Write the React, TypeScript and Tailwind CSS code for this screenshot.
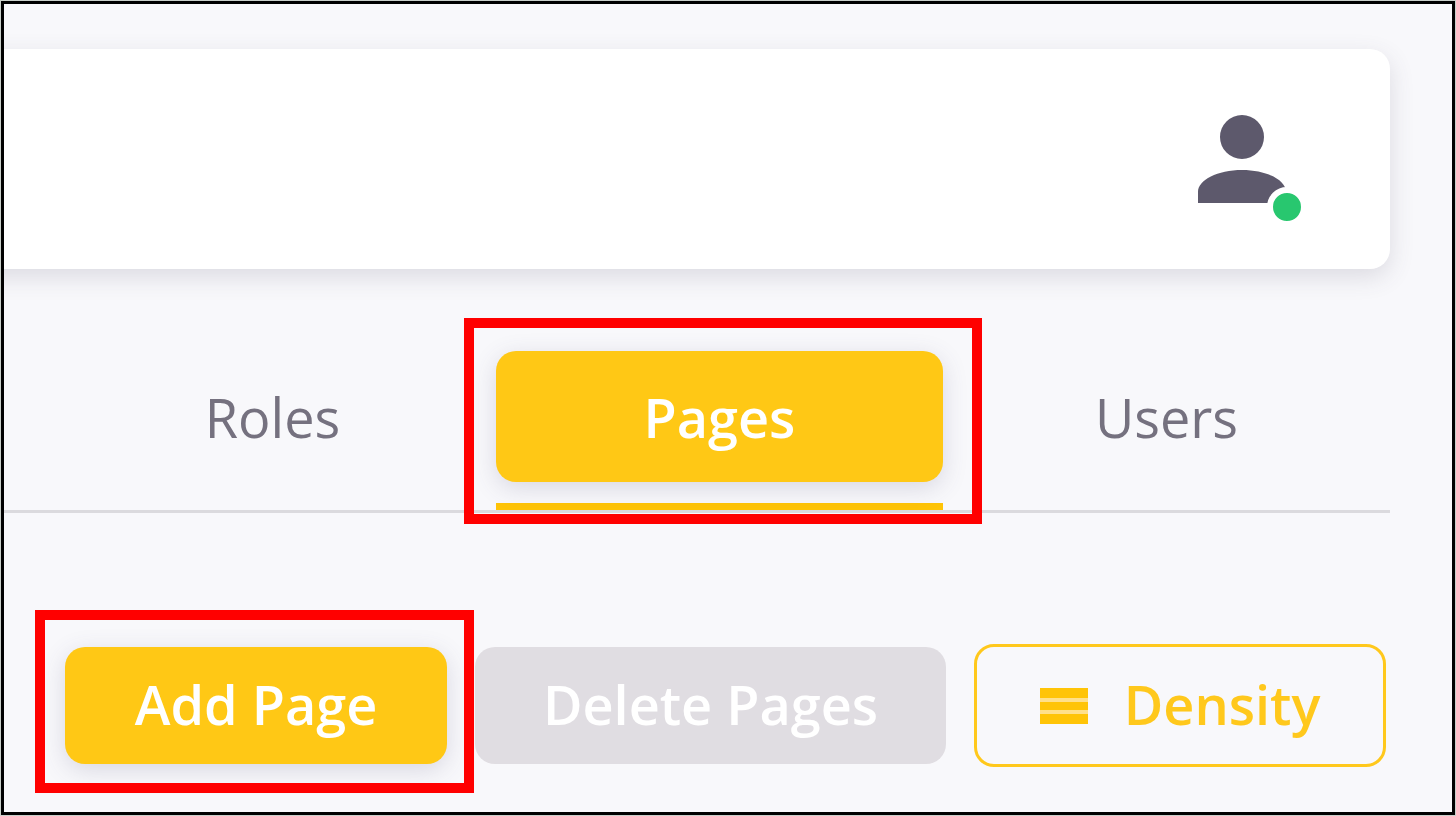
import React from "react"
import clsx from "clsx"

const tabs = ["Roles", "Pages", "Users"]

// Red frame that points at the control it is placed around
const Highlight = ({ className }: { className: string }) => (
  <span
    aria-hidden="true"
    className={clsx(
      "pointer-events-none absolute z-10 border-[10px] border-[#ff0000]",
      className
    )}
  />
)

const ProfileButton = () => (
  <button type="button" aria-label="Profile" className="relative">
    <svg viewBox="0 0 24 24" className="size-[132px] fill-[#5d596c]">
      <path d="M12 4a4 4 0 0 1 4 4 4 4 0 0 1-4 4 4 4 0 0 1-4-4 4 4 0 0 1 4-4m0 10c4.42 0 8 1.79 8 4v2H4v-2c0-2.21 3.58-4 8-4" />
    </svg>
    <span className="absolute right-px -bottom-0.5 size-10 rounded-full border-6 border-white bg-[#28c76f]" />
  </button>
)

const Tabs = () => (
  <div
    role="tablist"
    className="mt-[82px] mr-[62px] grid grid-cols-3 border-b-3 border-[#dbdade] pl-[45px]"
  >
    {tabs.map((tab) => {
      const active = tab === "Pages"
      return (
        <div
          key={tab}
          className={clsx(
            "relative border-b-7 pb-[21px]",
            active ? "border-[#ffc407]" : "border-transparent"
          )}
        >
          <button
            type="button"
            role="tab"
            aria-selected={active}
            className={clsx(
              "h-[131px] w-full rounded-[20px] text-[54px] leading-[64px]",
              active
                ? "bg-[#ffc815] font-semibold text-white shadow-[0_6px_24px_rgba(75,70,110,0.18)]"
                : "font-normal text-[#75717f]"
            )}
          >
            {tab}
          </button>
          {active && <Highlight className="-top-[33px] -right-[39px] -bottom-[21px] -left-8" />}
        </div>
      )
    })}
  </div>
)

const Toolbar = () => (
  <div className="mt-[131px] mr-[66px] flex items-center justify-end gap-7 text-[54px] leading-[64px] font-semibold whitespace-nowrap">
    <div className="relative">
      <button
        type="button"
        className="h-[117px] w-[382px] rounded-[20px] bg-[#ffc815] pb-1 text-white shadow-[0_6px_24px_rgba(75,70,110,0.18)]"
      >
        Add Page
      </button>
      <Highlight className="-top-[37px] -right-[27px] -bottom-[29px] -left-[30px]" />
    </div>
    <button
      type="button"
      disabled
      className="h-[117px] w-[471px] rounded-[20px] bg-[#e0dde2] pb-1 text-white"
    >
      Delete Pages
    </button>
    <button
      type="button"
      className="flex h-[123px] w-[412px] items-center justify-center gap-9 rounded-[20px] border-3 border-[#ffc81c] text-[#ffc81c]"
    >
      <svg viewBox="0 0 48 38" className="h-[38px] w-12">
        <path fill="#ffe08a" d="M0 1h48v36H0z" />
        <path fill="#ffc407" d="M0 1h48v10H0zM0 15h48v8H0zM0 27h48v10H0z" />
      </svg>
      <span className="pb-1">Density</span>
    </button>
  </div>
)

export default function App() {
  return (
    <div className="min-h-screen border border-[#c9cfca] bg-black p-[3px] font-['Open_Sans',sans-serif]">
      <main className="min-h-[808px] overflow-hidden bg-[#f8f8fb] pt-[45px] pb-11">
        {/* The bar runs on past the left edge */}
        <header className="mr-[62px] -ml-10 flex h-[220px] items-center justify-end rounded-[20px] bg-white pr-[82px] shadow-[0_8px_24px_rgba(75,70,92,0.16)]">
          <ProfileButton />
        </header>
        <Tabs />
        <Toolbar />
      </main>
    </div>
  )
}
